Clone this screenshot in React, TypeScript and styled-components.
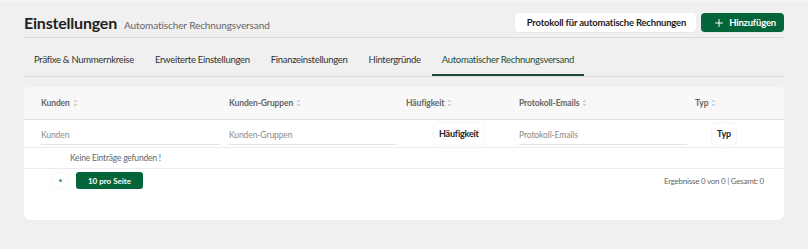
import styled, { createGlobalStyle } from "styled-components";
import { Plus } from "lucide-react";

const GlobalStyle = createGlobalStyle`
  body {
    margin: 0;
    background: #eff0ef;
    font-family: Lato, "Noto Sans", sans-serif;
    color: #333;
  }
`;

const tabs = [
  "Präfixe & Nummernkreise",
  "Erweiterte Einstellungen",
  "Finanzeinstellungen",
  "Hintergründe",
  "Automatischer Rechnungsversand",
];

const SortIcon = () => (
  <SortSvg width="5" height="8" viewBox="0 0 5 8">
    <path d="M2.5 0.5 L4.5 3 H0.5 Z" fill="#d0d0d0" />
    <path d="M2.5 7.5 L4.5 5 H0.5 Z" fill="#d0d0d0" />
  </SortSvg>
);

const App = () => {
  return (
    <Page>
      <GlobalStyle />
      <Header>
        <TitleGroup>
          <Title>Einstellungen</Title>
          <Subtitle>Automatischer Rechnungsversand</Subtitle>
        </TitleGroup>
        <Actions>
          <Button>Protokoll für automatische Rechnungen</Button>
          <Button $primary>
            <Plus size={12} strokeWidth={2} />
            Hinzufügen
          </Button>
        </Actions>
      </Header>
      <TabList>
        {tabs.map((tab, i) => (
          <Tab key={tab} $active={i === tabs.length - 1}>
            {tab}
          </Tab>
        ))}
      </TabList>
      <Card>
        <HeadRow>
          <HeadCell>
            Kunden <SortIcon />
          </HeadCell>
          <HeadCell>
            Kunden-Gruppen <SortIcon />
          </HeadCell>
          <HeadCell>
            Häufigkeit <SortIcon />
          </HeadCell>
          <HeadCell>
            Protokoll-Emails <SortIcon />
          </HeadCell>
          <HeadCell>
            Typ <SortIcon />
          </HeadCell>
        </HeadRow>
        <FilterRow>
          <Cell>
            <FilterInput placeholder="Kunden" $width={179} />
          </Cell>
          <Cell>
            <FilterInput placeholder="Kunden-Gruppen" $width={168} />
          </Cell>
          <Cell>
            <SelectBox $offset={27}>Häufigkeit</SelectBox>
          </Cell>
          <Cell>
            <FilterInput placeholder="Protokoll-Emails" $width={168} />
          </Cell>
          <Cell>
            <SelectBox $offset={16}>Typ</SelectBox>
          </Cell>
        </FilterRow>
        <EmptyRow>Keine Einträge gefunden !</EmptyRow>
        <Pagination>
          <PageSize>
            <PageDot>
              <span />
            </PageDot>
            <PerPage>10 pro Seite</PerPage>
          </PageSize>
          <Results>Ergebnisse 0 von 0 | Gesamt: 0</Results>
        </Pagination>
      </Card>
    </Page>
  );
};

const Page = styled.div`
  width: 760px;
  padding: 0 24px;
  border-top: 2px solid #f5f6f5;
`;

const Header = styled.header`
  display: flex;
  align-items: center;
  justify-content: space-between;
  padding: 11px 0 5px;
  border-bottom: 1px solid #dadbda;
`;

const TitleGroup = styled.div`
  display: flex;
  align-items: baseline;
  gap: 7px;
  height: 19px;
`;

const Title = styled.h1`
  margin: 0;
  font-size: 16px;
  line-height: 19px;
  font-weight: 700;
  letter-spacing: -0.2px;
  color: #222;
`;

const Subtitle = styled.span`
  font-size: 10px;
  line-height: 19px;
  letter-spacing: -0.1px;
  color: #666;
`;

const Actions = styled.div`
  display: flex;
  gap: 5px;
`;

const Button = styled.button<{ $primary?: boolean }>`
  display: flex;
  align-items: center;
  gap: 4px;
  height: 19px;
  padding: ${(p) => (p.$primary ? "0 8px 0 12px" : "0 10px 0 12px")};
  border: none;
  border-radius: 4px;
  font-family: inherit;
  font-size: 9.5px;
  font-weight: 700;
  letter-spacing: -0.2px;
  background: ${(p) => (p.$primary ? "#05653a" : "#ffffff")};
  color: ${(p) => (p.$primary ? "#ffffff" : "#1d1d1d")};
  box-shadow: 0 1px 1px rgba(0, 0, 0, 0.04);
`;

const TabList = styled.nav`
  display: flex;
  gap: 1px;
  border-bottom: 1px solid #dadbda;
`;

const Tab = styled.div<{ $active?: boolean }>`
  padding: 15px 10px 7px;
  line-height: 14px;
  font-size: 9.5px;
  letter-spacing: -0.3px;
  color: ${(p) => (p.$active ? "#1f4d36" : "#333")};
  border-bottom: 2px solid ${(p) => (p.$active ? "#1d4a33" : "transparent")};
`;

const Card = styled.section`
  margin-top: 10px;
  background: #fff;
  border-radius: 6px;
  overflow: hidden;
  padding-bottom: 31px;
  box-shadow: 0 1px 1px rgba(0, 0, 0, 0.03);
`;

const columns = "188px 177px 113px 176px 1fr";

const HeadRow = styled.div`
  display: grid;
  grid-template-columns: ${columns};
  padding-left: 17px;
  height: 32px;
  align-items: center;
  background: #f8f8f8;
  border-bottom: 1px solid #dcdcdc;
`;

const HeadCell = styled.div`
  display: flex;
  align-items: center;
  gap: 3px;
  font-size: 8.5px;
  font-weight: 700;
  letter-spacing: -0.1px;
  color: #666;
`;

const SortSvg = styled.svg`
  display: block;
`;

const FilterRow = styled.div`
  display: grid;
  grid-template-columns: ${columns};
  padding-left: 17px;
  height: 27px;
  align-items: center;
  border-bottom: 1px solid #ebeaf6;
`;

const Cell = styled.div`
  display: flex;
  align-items: center;
`;

const FilterInput = styled.input<{ $width: number }>`
  width: ${(p) => p.$width}px;
  box-sizing: border-box;
  height: 19px;
  margin-top: 4px;
  padding: 0;
  border: none;
  border-bottom: 1px solid #e4e4e4;
  outline: none;
  font-family: inherit;
  font-size: 8.5px;
  letter-spacing: -0.1px;
  color: #333;
  &::placeholder {
    color: #8a8a8a;
  }
`;

const SelectBox = styled.div<{ $offset: number }>`
  margin-left: ${(p) => p.$offset}px;
  height: 22px;
  padding: 0 5px;
  display: flex;
  align-items: center;
  border: 1px solid #f6f6f6;
  border-radius: 5px;
  font-size: 9px;
  font-weight: 700;
  letter-spacing: -0.2px;
  color: #222;
`;

const EmptyRow = styled.div`
  height: 20px;
  display: flex;
  align-items: center;
  padding-left: 46px;
  font-size: 8.5px;
  letter-spacing: -0.2px;
  color: #666;
  border-bottom: 1px solid #ebeaf6;
`;

const Pagination = styled.div`
  display: flex;
  align-items: flex-start;
  justify-content: space-between;
  padding: 3px 20px 0 28px;
`;

const PageSize = styled.div`
  display: flex;
  align-items: center;
  gap: 7px;
`;

const PageDot = styled.div`
  width: 17px;
  height: 17px;
  display: flex;
  align-items: center;
  justify-content: center;
  border: 1px solid #f8f8f8;
  border-radius: 5px;
  box-sizing: border-box;
  span {
    width: 3px;
    height: 3px;
    border-radius: 50%;
    background: #5a9a7c;
  }
`;

const PerPage = styled.button`
  width: 67px;
  height: 17px;
  border: none;
  border-radius: 3px;
  background: #05653a;
  color: #fff;
  font-family: inherit;
  font-size: 8px;
  font-weight: 700;
`;

const Results = styled.span`
  margin-top: 4px;
  font-size: 8px;
  letter-spacing: -0.25px;
  color: #666;
`;

export default App;
